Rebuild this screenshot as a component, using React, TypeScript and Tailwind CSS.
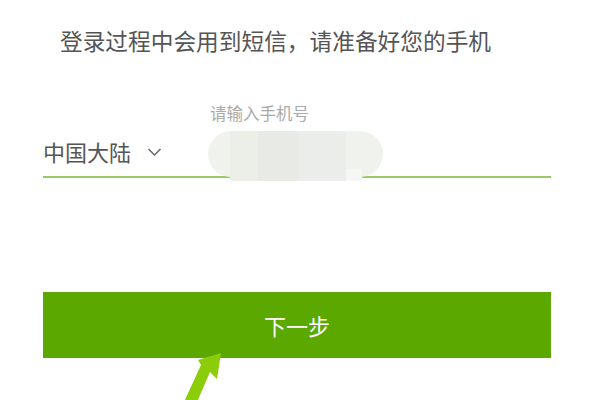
import React from "react";

export default function App() {
  return (
    <div
      className="relative w-[600px] h-[400px] overflow-hidden bg-white"
      style={{ fontFamily: '"Noto Sans CJK SC", "Noto Sans", sans-serif' }}
    >
      <div className="pt-[24px] pl-[60px] text-[22.7px] leading-[34px] text-[#555]">
        登录过程中会用到短信，请准备好您的手机
      </div>

      <div className="pl-[43px] pr-[49px] mt-[43px]">
        <div className="pl-[167px] text-[16.5px] leading-[24px] text-[#aaa]">请输入手机号</div>
        <div className="relative flex h-[53px] items-center border-b-2 border-[#97c964] pt-[2px]">
          <span className="text-[22px] text-[#555]">中国大陆</span>
          <svg className="ml-[16px]" width="15" height="10" viewBox="0 0 15 10">
            <path d="M1.5 2 L7.5 8 L13.5 2" fill="none" stroke="#666" strokeWidth="1.5" />
          </svg>
          {/* redaction blob */}
          <div className="absolute left-[165px] top-[6px] h-[46px] w-[175px] rounded-full bg-[#f0f2ed]" />
          <div className="absolute left-[187px] top-[6px] h-[50px] w-[116px] bg-[#eceee8]" />
          <div className="absolute left-[215px] top-[6px] h-[50px] w-[40px] bg-[#e8eae6]" />
          <div className="absolute left-[255px] top-[6px] h-[50px] w-[48px] bg-[#ebedea]" />
          <div className="absolute left-[303px] top-[44px] h-[12px] w-[16px] bg-[#f6f7f4]" />
        </div>
      </div>

      <div className="pl-[43px] pr-[49px] mt-[114px]">
        <div className="flex h-[66px] items-center justify-center bg-[#5aa800] text-[22px] text-white">
          下一步
        </div>
      </div>

      <svg className="absolute left-0 top-0" width="600" height="400" viewBox="0 0 600 400">
        <polygon
          points="221,353 217,379 210,372 197,402 184,402 201,365 198,360"
          fill="#8ccd0a"
        />
      </svg>
    </div>
  );
}
